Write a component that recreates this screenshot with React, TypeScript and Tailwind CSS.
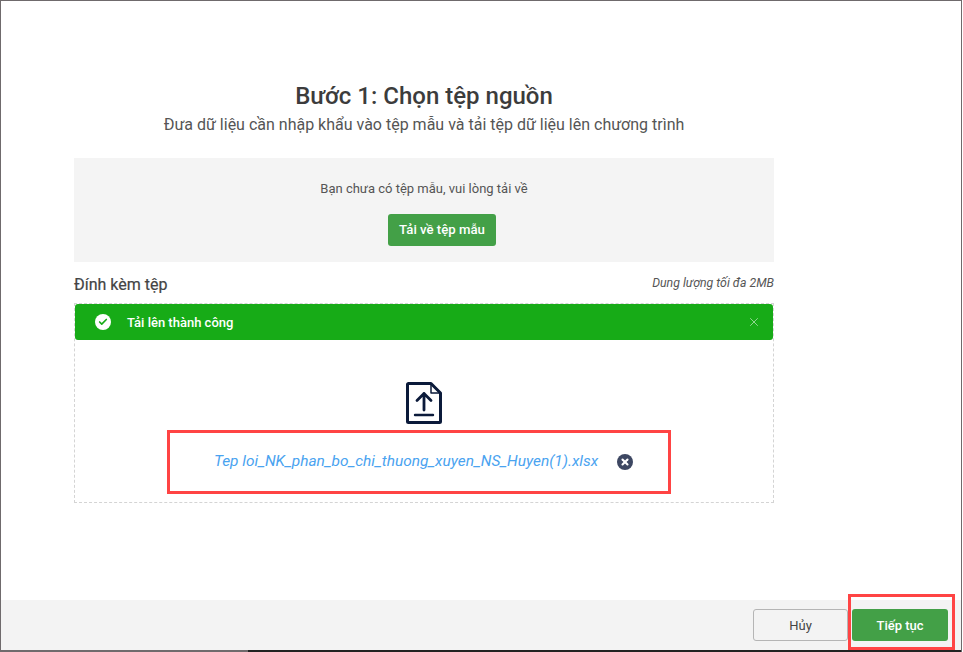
import { Check, X } from "lucide-react"

const font = { fontFamily: "Roboto, sans-serif" }

function FileUploadIcon() {
  return (
    <svg width="36" height="42" viewBox="0 0 36 42" fill="none" stroke="#0b1a3a" strokeLinejoin="round" strokeLinecap="round">
      <path d="M2.500 1.500H25L34.500 11V39.500A1 1 0 0 1 33.500 40.500H2.500A1 1 0 0 1 1.500 39.500V2.500A1 1 0 0 1 2.500 1.500Z" strokeWidth="3" />
      <path d="M25 2V11H34" strokeWidth="1.500" />
      <path d="M18 28V11.500M11 18.500L18 11.500L25 18.500" strokeWidth="2.800" />
      <path d="M9 33H27" strokeWidth="2.400" />
    </svg>
  )
}

export default function App() {
  return (
    <div
      className="w-[962px] h-[652px] flex flex-col bg-white border-l border-r border-t border-b-2 border-[#6f6a6c] text-[#333]"
      style={font}
    >
      <div className="flex-1 ml-[73px] w-[700px] flex flex-col items-center pt-[80px]">
        <h1 className="text-[24px] leading-[30px] font-medium text-[#3c3c3c]">Bước 1: Chọn tệp nguồn</h1>
        <p className="mt-[1px] text-[16px] leading-[26px] text-[#555]">
          Đưa dữ liệu cần nhập khẩu vào tệp mẫu và tải tệp dữ liệu lên chương trình
        </p>

        <div className="w-[700px] h-[104px] mt-[20px] bg-[#f4f4f4] flex flex-col items-center pt-[21px]">
          <p className="text-[13px] leading-[20px] text-[#555]">Bạn chưa có tệp mẫu, vui lòng tải về</p>
          <button className="mt-[15px] ml-[36px] w-[108px] h-[32px] rounded-[3px] bg-[#43a047] text-white text-[13.200px] font-medium">
            Tải về tệp mẫu
          </button>
        </div>

        <div className="w-[700px] mt-[11px] h-[24px] flex items-center justify-between">
          <span className="text-[16px] text-[#444] [-webkit-text-stroke:0.2px_#444]">Đính kèm tệp</span>
          <span className="text-[12.300px] italic text-[#555] -mt-[4px]">Dung lượng tối đa 2MB</span>
        </div>

        <div className="w-[700px] h-[200px] mt-[6px] border border-dashed border-[#d4d4d4] flex flex-col items-center">
          <div className="w-full h-[36px] rounded-[3px] bg-[#17ab17] text-white flex items-center pl-[20px] pr-[12px]">
            <span className="w-[16px] h-[16px] rounded-full bg-white flex items-center justify-center">
              <Check size={10} strokeWidth={4} color="#17ab17" />
            </span>
            <span className="ml-[16px] pt-[2px] text-[13px] font-medium flex-1">Tải lên thành công</span>
            <X size={14} strokeWidth={1} color="#e8f5e8" />
          </div>
          <div className="mt-[42px]">
            <FileUploadIcon />
          </div>
          <div className="mt-[6px] self-start ml-[92px] w-[504px] h-[64px] border-[3px] border-[#ff4444] flex items-center pl-[44px]">
            <span className="text-[15.450px] italic text-[#4aa3f0]">Tep loi_NK_phan_bo_chi_thuong_xuyen_NS_Huyen(1).xlsx</span>
            <span className="ml-[19px] w-[16px] h-[16px] rounded-full bg-[#3d4762] flex items-center justify-center">
              <X size={10} strokeWidth={5} color="#fff" />
            </span>
          </div>
        </div>
      </div>

      <div className="relative h-[50px] bg-[#f3f3f3] flex items-start justify-end gap-[4px] pt-[9px] pr-[13px]">
        <button className="w-[95px] h-[32px] pt-[2px] rounded-[3px] border border-[#b5b5b5] text-[13px] text-[#444]">Hủy</button>
        <button className="w-[96px] h-[32px] pt-[2px] rounded-[3px] bg-[#43a047] text-white text-[13px] font-medium">Tiếp tục</button>
        <div className="absolute left-[847px] top-[-6px] w-[107px] h-[56px] border-[3px] border-[#ff4444]" />
        <div className="absolute left-[247px] bottom-[-2px] right-0 h-[2px] bg-[#222]" />
      </div>
    </div>
  )
}
